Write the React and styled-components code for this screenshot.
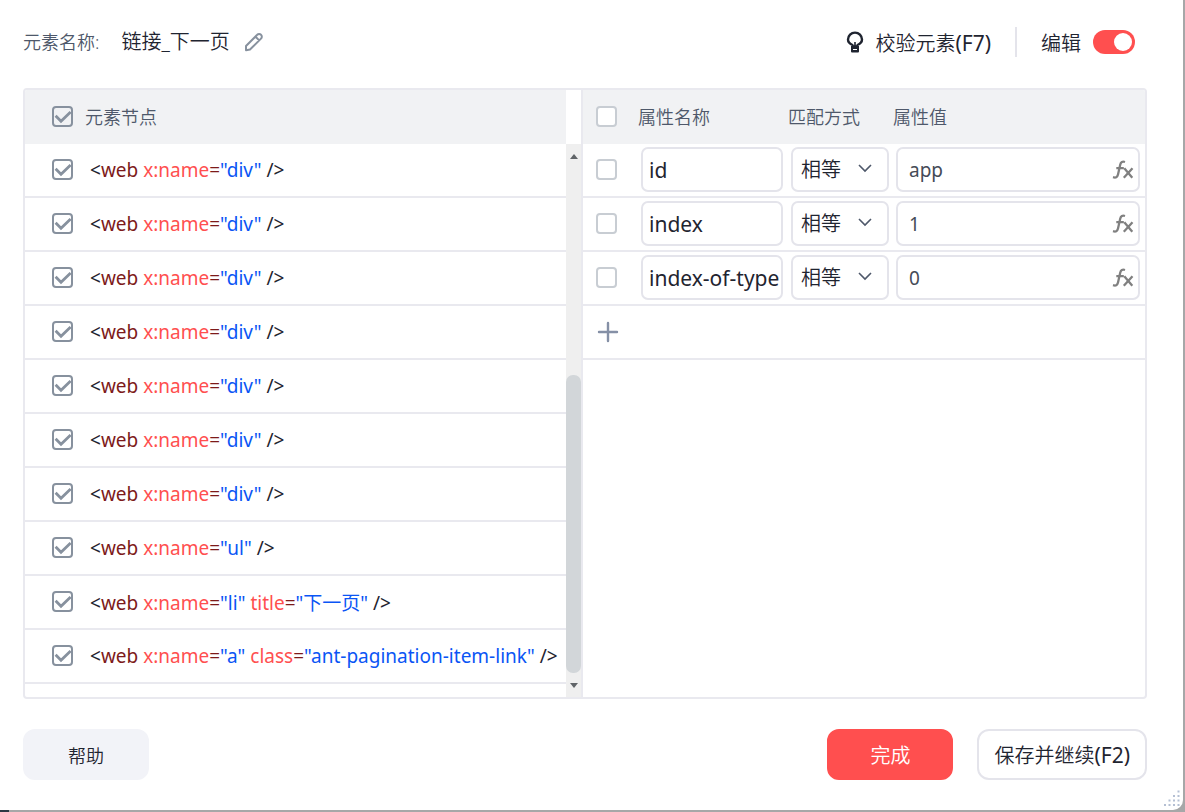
import { useState } from "react";
import styled, { createGlobalStyle } from "styled-components";

const GlobalStyle = createGlobalStyle`
  * {
    box-sizing: border-box;
  }
  body {
    margin: 0;
    background: #a6a7a8;
    color: #1f2430;
    font-family: "Noto Sans", "Noto Sans CJK SC", sans-serif;
    font-size: 18px;
    font-weight: 350;
  }
  button, input, select {
    font: inherit;
    color: inherit;
  }
`;

const Backdrop = styled.div`
  min-height: 100vh;
  display: flex;
  padding: 0 2px 2px 0;
  background: linear-gradient(#2b3844, #2b3844) 0 100% / 9px 2px no-repeat;
`;

const Dialog = styled.main`
  position: relative;
  flex: 1;
  min-width: 0;
  display: flex;
  flex-direction: column;
  padding: 27px 36px 30px 23px;
  background: #fff;
  border-bottom-right-radius: 10px;
`;

const Header = styled.header`
  display: flex;
  align-items: center;
  height: 30px;
  margin-bottom: 31px;
`;

const NameGroup = styled.div`
  display: flex;
  align-items: center;
  padding-bottom: 3px;
`;

const NameLabel = styled.span`
  color: #4e586a;
  margin-right: 22px;
`;

const ElementName = styled.span`
  font-size: 20px;
  margin-right: 14px;
`;

const IconButton = styled.button`
  display: flex;
  align-items: center;
  padding: 0;
  border: 0;
  background: none;
  cursor: pointer;
`;

const EditButton = styled(IconButton)`
  padding-top: 3px;
`;

const HeaderTools = styled.div`
  display: flex;
  align-items: center;
  margin-left: auto;
  padding-right: 12px;
  font-size: 20px;
`;

const VerifyButton = styled(IconButton)`
  gap: 10px;
`;

const Hotkey = styled.span`
  font-size: 21px;
  font-weight: 400;
`;

const Divider = styled.span`
  width: 2px;
  height: 30px;
  margin: 0 24px;
  background: #e4e4eb;
`;

const SwitchLabel = styled.label`
  display: flex;
  align-items: center;
  gap: 12px;
`;

const Switch = styled.input`
  appearance: none;
  width: 42px;
  height: 24px;
  margin: 0;
  padding: 3px;
  display: flex;
  justify-content: flex-start;
  border-radius: 12px;
  background: #c5cad3;
  &:checked {
    justify-content: flex-end;
    background: #ff4f4f;
  }
  &::before {
    content: "";
    width: 18px;
    height: 18px;
    border-radius: 50%;
    background: #fff;
  }
`;

const Panel = styled.div`
  flex: 1;
  display: grid;
  grid-template-columns: 558fr 562fr;
  border: 2px solid #e9e9ef;
  border-radius: 4px;
  overflow: hidden;
`;

const NodePane = styled.section`
  display: grid;
  grid-template-columns: minmax(0, 1fr) 15px;
  border-right: 2px solid #e9e9ef;
`;

const Table = styled.table`
  width: 100%;
  align-self: start;
  border-spacing: 0;
  table-layout: fixed;
`;

const HeadCell = styled.th`
  width: ${(props) => props.$width || "auto"};
  height: 54px;
  padding: 0 0 2px ${(props) => props.$indent || "0"};
  background: #f1f2f4;
  color: #4e586a;
  font-weight: 350;
  text-align: left;
`;

const Cell = styled.td`
  height: 54px;
  padding: 0 ${(props) => props.$end || "5px"} 1px
    ${(props) => props.$indent || "3px"};
  border-bottom: 2px solid #e9e9ef;
  white-space: nowrap;
`;

const CheckWrap = styled.span`
  display: grid;
  width: 21px;
  height: 21px;
  & > * {
    grid-area: 1 / 1;
  }
  svg {
    pointer-events: none;
    visibility: hidden;
  }
  input:checked + svg {
    visibility: visible;
  }
`;

const CheckInput = styled.input`
  appearance: none;
  width: 21px;
  height: 21px;
  margin: 0;
  border: 2px solid #c8cdd3;
  border-radius: 4px;
  background: #fff;
  &:checked {
    border-color: #87919e;
    background: transparent;
  }
`;

const Markup = styled.label`
  font-size: 19px;
  font-weight: 400;
`;

const Tag = styled.span`
  color: #7d1a1a;
`;

const AttrName = styled.span`
  color: #ff4f4f;
`;

const AttrValue = styled.span`
  color: #0a55f5;
`;

const Scrollbar = styled.div`
  display: grid;
  grid-template-rows: 24px 1fr 24px;
  margin-top: 54px;
  background: #efefef;
`;

const ScrollArrow = styled.span`
  align-self: center;
  justify-self: center;
  border: 4px solid transparent;
  border-top: ${(props) => (props.$down ? "5px solid #606468" : "0")};
  border-bottom: ${(props) => (props.$down ? "0" : "5px solid #606468")};
`;

const Thumb = styled.span`
  align-self: end;
  height: 59%;
  border-radius: 7px;
  background: #d2d6d9;
`;

const TextInput = styled.input`
  display: block;
  width: 100%;
  height: 45px;
  padding: 0 0 0 6px;
  border: 2px solid #e4e4eb;
  border-radius: 7px;
  background: #fff;
  font-size: 21px;
  font-weight: 400;
`;

const SelectBox = styled.div`
  display: grid;
  align-items: center;
  & > * {
    grid-area: 1 / 1;
  }
  svg {
    justify-self: end;
    margin-right: 17px;
    pointer-events: none;
  }
`;

const Select = styled.select`
  appearance: none;
  width: 100%;
  height: 45px;
  padding: 0 0 0 8px;
  border: 2px solid #e4e4eb;
  border-radius: 7px;
  background: #fff;
  font-size: 20px;
`;

const ValueBox = styled.div`
  display: flex;
  align-items: center;
  height: 45px;
  padding: 0 4px 0 11px;
  border: 2px solid #e4e4eb;
  border-radius: 7px;
`;

const ValueInput = styled.input`
  flex: 1;
  min-width: 0;
  padding: 0;
  border: 0;
  outline: 0;
  color: #454b57;
  font-size: 19px;
  font-weight: 400;
`;

const Footer = styled.footer`
  display: flex;
  gap: 24px;
  margin-top: 30px;
`;

const Button = styled.button`
  min-width: 126px;
  height: 51px;
  padding: 0 15px;
  border: 2px solid ${(props) => props.$border || props.$bg};
  border-radius: 12px;
  background: ${(props) => props.$bg};
  color: ${(props) => props.$color || "#1f2430"};
  font-size: ${(props) => props.$size || "20px"};
  white-space: nowrap;
  cursor: pointer;
`;

const HelpButton = styled(Button)`
  margin-right: auto;
`;

const Grip = styled.svg`
  position: absolute;
  right: 2px;
  bottom: 3px;
`;

const nodes = [
  ...Array.from({ length: 7 }, () => [["x:name", "div"]]),
  [["x:name", "ul"]],
  [
    ["x:name", "li"],
    ["title", "下一页"],
  ],
  [
    ["x:name", "a"],
    ["class", "ant-pagination-item-link"],
  ],
];

const attributes = [
  { name: "id", value: "app" },
  { name: "index", value: "1" },
  { name: "index-of-type", value: "0" },
];

function Checkbox({ label, defaultChecked, id }) {
  return (
    <CheckWrap>
      <CheckInput
        type="checkbox"
        id={id}
        aria-label={label}
        defaultChecked={defaultChecked}
      />
      <svg width="21" height="21" viewBox="0 0 21 21" fill="none">
        <path d="M3.6 9.8 9 15.2 18.6 6" stroke="#87919e" strokeWidth="2.8" />
      </svg>
    </CheckWrap>
  );
}

function PencilIcon() {
  return (
    <svg width="20" height="20" viewBox="0 0 20 20" fill="none">
      <path
        d="M2 18.2V14L13.2 2.8a2.6 2.6 0 0 1 3.8 0 2.6 2.6 0 0 1 0 3.8L6 17.5zM11.6 4.8l3.8 3.8"
        stroke="#87919e"
        strokeWidth="2"
        strokeLinejoin="round"
      />
    </svg>
  );
}

function BulbIcon() {
  return (
    <svg width="20" height="22" viewBox="0 0 20 22" fill="none">
      <path
        d="M7.500 15.500v-1.500C4.700 12.800 3 11 3 8.600a7 7 0 0 1 14 0c0 2.400-1.700 4.200-4.500 5.400v1.500z"
        stroke="#1f2430"
        strokeWidth="2.400"
        strokeLinejoin="round"
      />
      <path d="M10 11v5" stroke="#1f2430" strokeWidth="1.600" />
      <path d="M6 15h8v5.500q0 1-1 1H7q-1 0-1-1z" fill="#1f2430" />
      <path d="M8 18.500h4" stroke="#fff" strokeWidth="1" />
    </svg>
  );
}

function FxIcon() {
  return (
    <svg width="22" height="20" viewBox="0 0 22 20" fill="none">
      <path
        d="M1 17.200c2.800.9 4.300.2 5-2.700L8.200 4.800C8.800 2 10.500 1.200 13 2M4.300 8.200h7.500M12.300 8.200l8 9.500M20.500 8.200l-8.700 9.500"
        stroke="#808080"
        strokeWidth="2.300"
      />
    </svg>
  );
}

function NodeMarkup({ attrs }) {
  return (
    <>
      &lt;<Tag>web</Tag>
      {attrs.map(([name, value]) => (
        <span key={name}>
          {" "}
          <AttrName>{name}</AttrName>
          <Tag>=</Tag>
          <AttrValue>"{value}"</AttrValue>
        </span>
      ))}{" "}
      /&gt;
    </>
  );
}

function NodeTable() {
  return (
    <NodePane>
      <Table>
        <thead>
          <tr>
            <HeadCell $width="60px" $indent="27px">
              <Checkbox label="全选节点" defaultChecked />
            </HeadCell>
            <HeadCell>元素节点</HeadCell>
          </tr>
        </thead>
        <tbody>
          {nodes.map((attrs, i) => (
            <tr key={i}>
              <Cell $indent="27px">
                <Checkbox id={`node-${i}`} defaultChecked />
              </Cell>
              <Cell $indent="5px">
                <Markup htmlFor={`node-${i}`}>
                  <NodeMarkup attrs={attrs} />
                </Markup>
              </Cell>
            </tr>
          ))}
        </tbody>
      </Table>
      <Scrollbar aria-hidden="true">
        <ScrollArrow />
        <Thumb />
        <ScrollArrow $down />
      </Scrollbar>
    </NodePane>
  );
}

function AttributeTable() {
  return (
    <Table>
      <thead>
        <tr>
          <HeadCell $width="55px" $indent="13px">
            <Checkbox label="全选属性" />
          </HeadCell>
          <HeadCell $width="150px">属性名称</HeadCell>
          <HeadCell $width="105px">匹配方式</HeadCell>
          <HeadCell>属性值</HeadCell>
        </tr>
      </thead>
      <tbody>
        {attributes.map(({ name, value }) => (
          <tr key={name}>
            <Cell $indent="13px">
              <Checkbox label={name} />
            </Cell>
            <Cell>
              <TextInput aria-label="属性名称" defaultValue={name} />
            </Cell>
            <Cell $end="4px">
              <SelectBox>
                <Select aria-label="匹配方式">
                  <option>相等</option>
                </Select>
                <svg width="14" height="11" viewBox="0 0 14 11" fill="none">
                  <path d="M1 1l6 6 6-6" stroke="#4e586a" strokeWidth="1.6" />
                </svg>
              </SelectBox>
            </Cell>
            <Cell>
              <ValueBox>
                <ValueInput aria-label="属性值" defaultValue={value} />
                <IconButton aria-label="表达式">
                  <FxIcon />
                </IconButton>
              </ValueBox>
            </Cell>
          </tr>
        ))}
        <tr>
          <Cell colSpan={4} $indent="14px">
            <IconButton aria-label="添加属性">
              <svg width="22" height="22" viewBox="0 0 22 22" fill="none">
                <path
                  d="M11 2v18M2 11h18"
                  stroke="#8590a6"
                  strokeWidth="2.400"
                  strokeLinecap="round"
                />
              </svg>
            </IconButton>
          </Cell>
        </tr>
      </tbody>
    </Table>
  );
}

function App() {
  const [editing, setEditing] = useState(true);

  return (
    <Backdrop>
      <GlobalStyle />
      <Dialog>
        <Header>
          <NameGroup>
            <NameLabel>元素名称:</NameLabel>
            <ElementName>链接_下一页</ElementName>
            <EditButton aria-label="重命名">
              <PencilIcon />
            </EditButton>
          </NameGroup>
          <HeaderTools>
            <VerifyButton>
              <BulbIcon />
              <span>
                校验元素<Hotkey>(F7)</Hotkey>
              </span>
            </VerifyButton>
            <Divider />
            <SwitchLabel>
              编辑
              <Switch
                type="checkbox"
                role="switch"
                checked={editing}
                onChange={(e) => setEditing(e.target.checked)}
              />
            </SwitchLabel>
          </HeaderTools>
        </Header>

        <Panel>
          <NodeTable />
          <AttributeTable />
        </Panel>

        <Footer>
          <HelpButton $bg="#f2f3f8" $size="18px">
            帮助
          </HelpButton>
          <Button $bg="#ff4f4f" $color="#fff">
            完成
          </Button>
          <Button $bg="#fff" $border="#e4e4eb">
            保存并继续<Hotkey>(F2)</Hotkey>
          </Button>
        </Footer>

        <Grip width="18" height="18" viewBox="0 0 18 18" fill="#b4bfd3">
          {[0, 1, 2, 3].map((col) =>
            Array.from({ length: col + 1 }, (_, row) => (
              <rect
                key={`${col}-${row}`}
                x={1 + col * 4.500}
                y={15 - row * 4.500}
                width="2"
                height="2"
              />
            ))
          )}
        </Grip>
      </Dialog>
    </Backdrop>
  );
}

export default App;
